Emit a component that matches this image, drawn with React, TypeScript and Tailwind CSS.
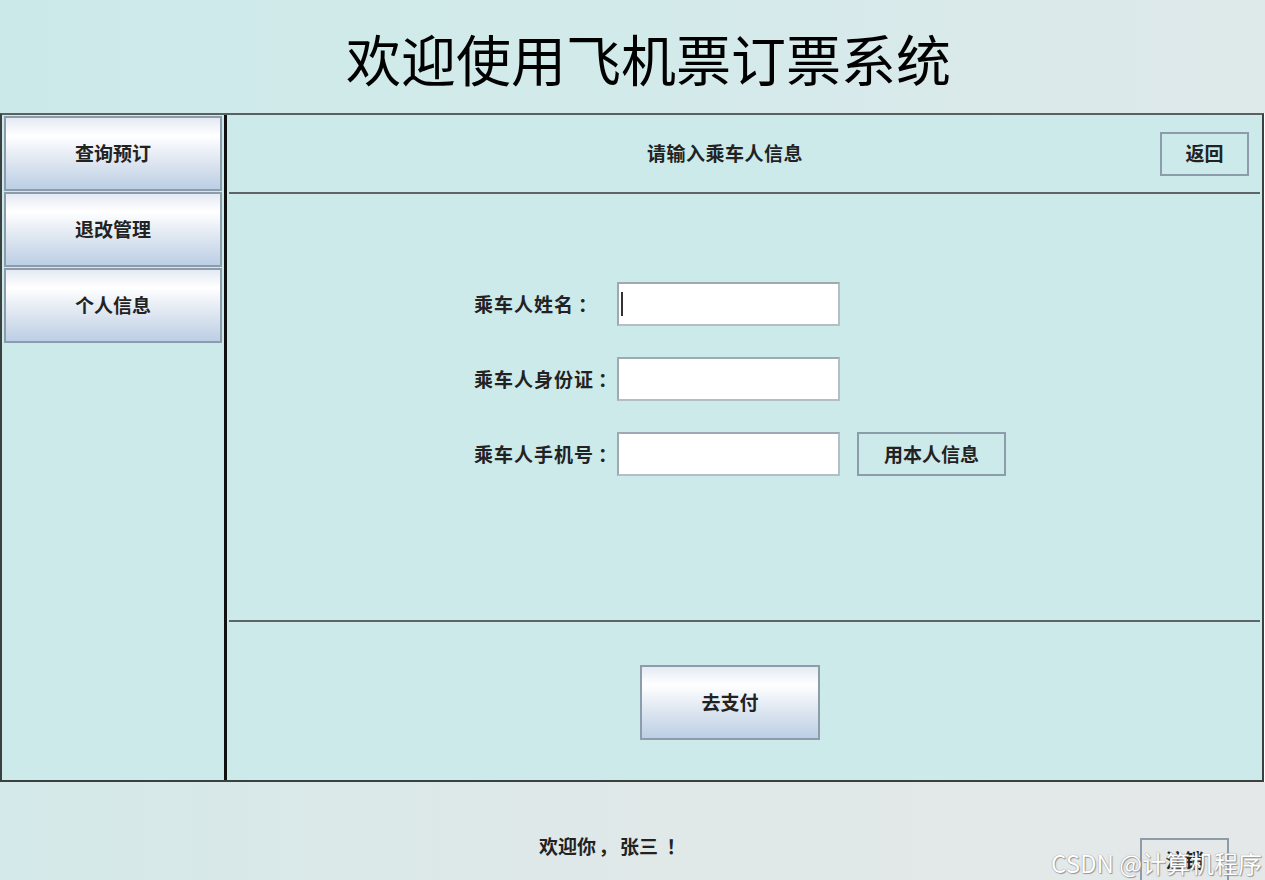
import React from "react";

const font = { fontFamily: '"Noto Sans CJK SC", "Noto Sans", sans-serif' };

function SideButton({ label }: { label: string }) {
  return (
    <div className="h-[75px] w-[218px] flex items-center justify-center border-2 border-[#8c9cab] bg-[linear-gradient(to_bottom,#e4eaf3_0%,#ffffff_25%,#dfe7f1_60%,#bccfe5_100%)] text-[19px] font-bold text-[#222]">
      {label}
    </div>
  );
}

function Field({ label, caret, extra }: { label: string; caret?: boolean; extra?: boolean }) {
  return (
    <div className="flex items-center h-[44px]">
      <div className="w-[143px] flex text-[19px] font-bold text-[#222] whitespace-nowrap tracking-[1px]">
        <span>{label}</span>
        <span className="ml-[4px]">：</span>
      </div>
      <div className="relative w-[223px] h-[44px] bg-white border-2 border-t-[#9ea9b3] border-l-[#9ea9b3] border-r-[#b4bec7] border-b-[#b4bec7]">
        {caret && <div className="absolute left-[2px] top-[8px] w-[2px] h-[24px] bg-[#333]" />}
      </div>
      {extra && (
        <div className="ml-[17px] w-[149px] h-[44px] flex items-center justify-center border-2 border-[#8c9cab] text-[19px] font-bold text-[#222]">
          用本人信息
        </div>
      )}
    </div>
  );
}

export default function App() {
  return (
    <div className="w-[1265px] h-[880px] flex flex-col overflow-hidden relative" style={font}>
      {/* header */}
      <div className="h-[113px] flex items-center justify-center pt-[1px] pl-[32px] bg-[linear-gradient(to_right,#cce9e9,#d3eaea_50%,#dfe9ea)]">
        <div className="text-[55px] leading-none text-black">欢迎使用飞机票订票系统</div>
      </div>

      {/* main frame */}
      <div className="h-[669px] w-[1264px] flex border-2 border-t-[#5a5f60] border-b-[#3b4040] border-l-[#3b4040] border-r-[#3b4040] bg-[#cceaea]">
        {/* left panel */}
        <div className="w-[222px] flex flex-col gap-[1px] pt-[1px] pl-[2px]">
          <SideButton label="查询预订" />
          <SideButton label="退改管理" />
          <SideButton label="个人信息" />
        </div>
        <div className="w-[3px] bg-[#111]" />
        {/* right panel */}
        <div className="flex-1 flex flex-col">
          <div className="h-[77px] flex items-center justify-between pl-[420px] pr-[13px]">
            <div className="text-[19px] font-bold text-[#222] tracking-[0.5px]">请输入乘车人信息</div>
            <div className="w-[89px] h-[44px] flex items-center justify-center border-2 border-[#8c9cab] text-[19px] font-bold text-[#222]">
              返回
            </div>
          </div>
          <div className="h-[2px] mx-[2px] bg-[#5e6566]" />
          <div className="h-[426px] flex flex-col gap-[31px] pt-[88px] pl-[247px]">
            <Field label="乘车人姓名" caret />
            <Field label="乘车人身份证" />
            <Field label="乘车人手机号" extra />
          </div>
          <div className="h-[2px] mx-[2px] bg-[#5e6566]" />
          <div className="flex-1 flex items-start pt-[43px] pl-[413px]">
            <div className="w-[180px] h-[75px] flex items-center justify-center border-2 border-[#8c9cab] bg-[linear-gradient(to_bottom,#e4eaf3_0%,#ffffff_25%,#dfe7f1_60%,#bccfe5_100%)] text-[19px] font-bold text-[#222]">
              去支付
            </div>
          </div>
        </div>
      </div>

      {/* footer */}
      <div className="flex-1 relative bg-[linear-gradient(to_right,#d4e9e9,#e0e8e8_50%,#e5e8e9)]">
        <div className="absolute left-[539px] top-[50px] flex items-center text-[19px] font-bold text-[#222] whitespace-nowrap">
          <span>欢迎你</span>
          <span className="w-[24px] text-center">，</span>
          <span>张三</span>
          <span className="w-[28px] text-center ml-[4px]">！</span>
        </div>
        <div className="absolute left-[1140px] top-[56px] w-[89px] h-[44px] flex items-center justify-center border-2 border-[#8c9cab] text-[19px] font-bold text-[#222]">
          注销
        </div>
        <div className="absolute right-[3px] bottom-[5px] text-[24px] leading-none text-white whitespace-nowrap [text-shadow:0_0_1px_#777,1px_1px_1px_#999]">
          CSDN @计算机程序
        </div>
      </div>
    </div>
  );
}
